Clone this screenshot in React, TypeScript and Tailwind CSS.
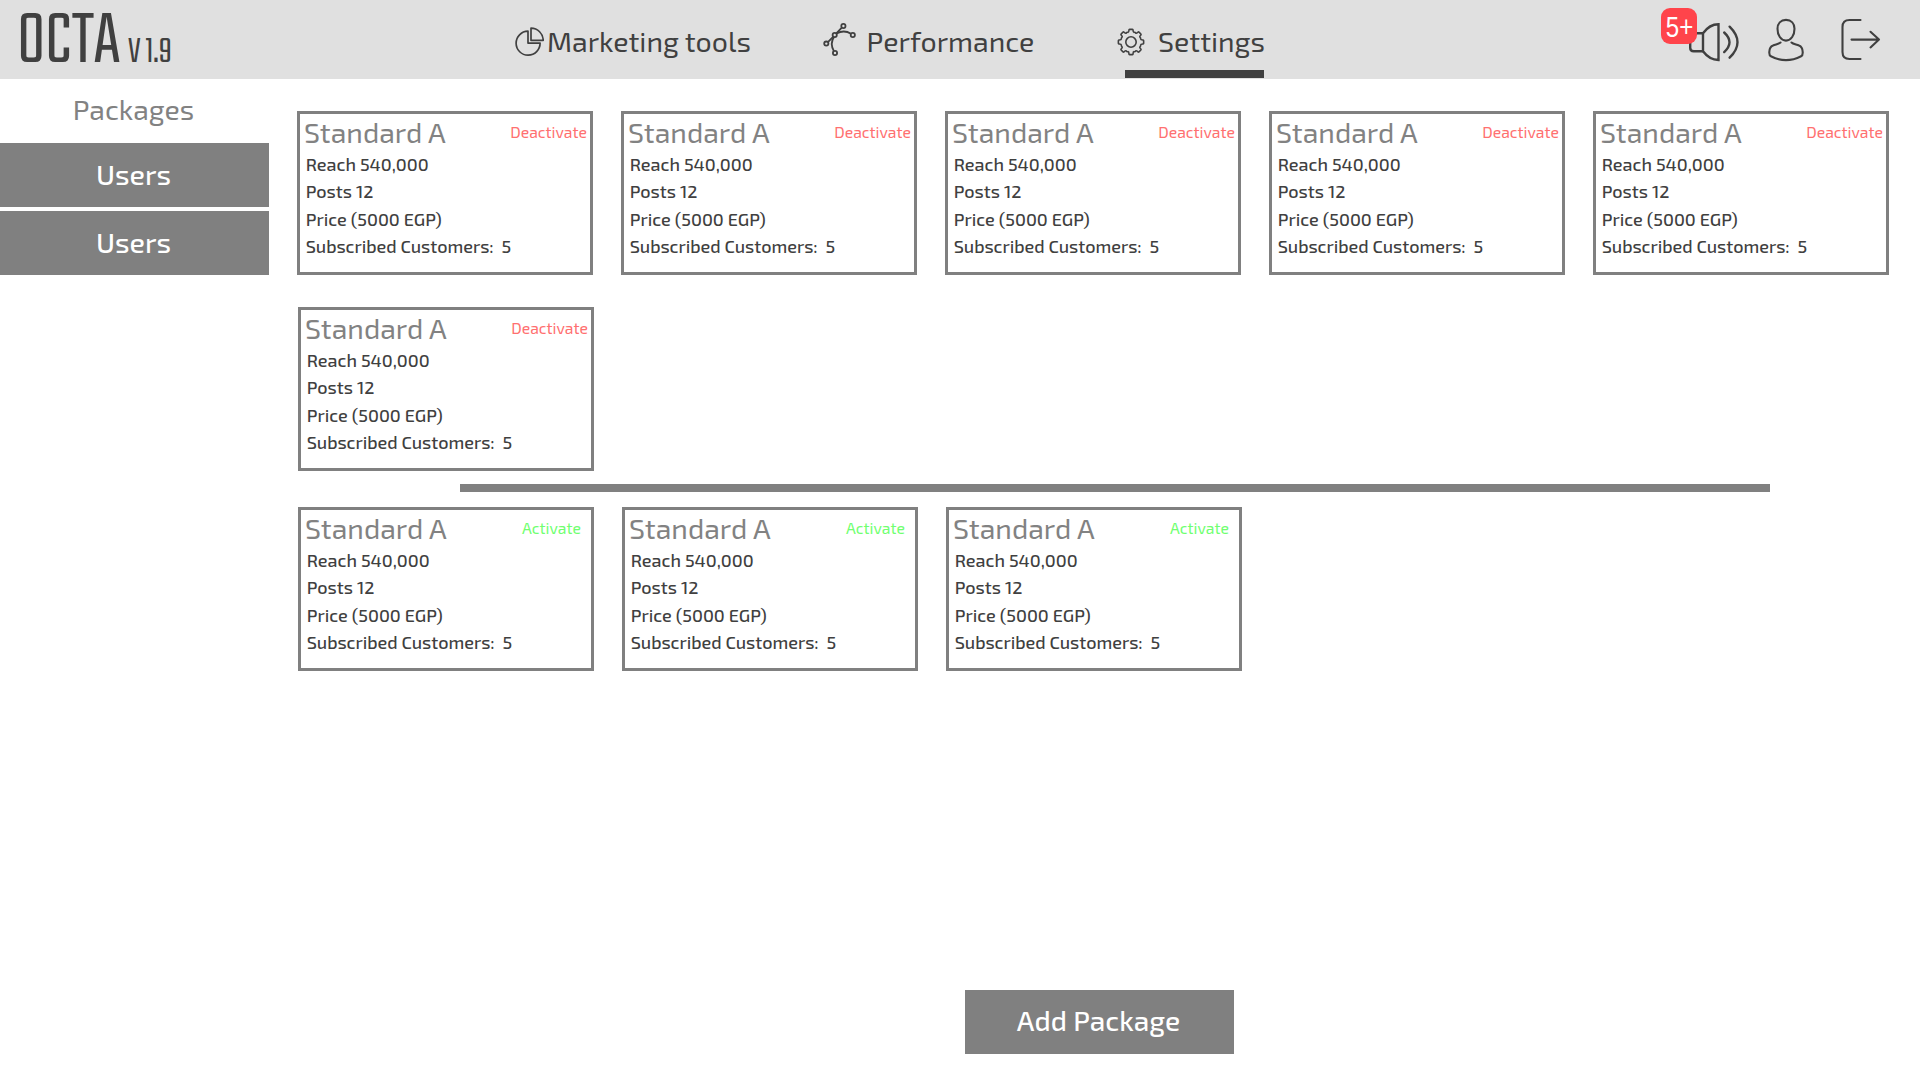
type PackageStatus = "active" | "inactive";

interface Package {
  name: string;
  reach: string;
  posts: number;
  price: string;
  customers: number;
}

const standard: Package = {
  name: "Standard A",
  reach: "540,000",
  posts: 12,
  price: "5000 EGP",
  customers: 5,
};

const firstRow = Array.from({ length: 5 }, () => standard);
const secondRow = [standard];
const inactive = Array.from({ length: 3 }, () => standard);

function PieIcon() {
  return (
    <svg className="h-[30px] w-[30px]" viewBox="514 27 30 30" fill="none" stroke="currentColor" strokeWidth="1.7" strokeLinejoin="round">
      <path d="M528 31.2a12 12 0 1 0 12.1 11.9H528z" />
      <path d="M531 28.2v12.1h12.2A12.2 12.2 0 0 0 531 28.2z" />
    </svg>
  );
}

function CurveIcon() {
  return (
    <svg className="h-[34px] w-[34px]" viewBox="823 23 34 34" fill="none" stroke="currentColor" strokeWidth="1.8">
      <path d="M827.9 42.1l5.2-5.3M836.3 33.4l5.5-5.7" />
      <path d="M836.6 33.4c5-2.6 10-2.4 14.4.3M834.1 36.8c-3 4.5-3 9.5-.2 14.3" />
      <circle cx="843.4" cy="26" r="2.1" />
      <circle cx="834.7" cy="35" r="2.1" />
      <circle cx="826.3" cy="43.6" r="2.1" />
      <circle cx="852.8" cy="35" r="2.1" />
      <circle cx="835" cy="53" r="2.1" />
    </svg>
  );
}

function gearPath(teeth: number, root: number, tip: number) {
  const at = (deg: number, r: number) => {
    const a = (deg * Math.PI) / 180;
    return `${(Math.sin(a) * r).toFixed(2)} ${(-Math.cos(a) * r).toFixed(2)}`;
  };
  const step = 360 / teeth;
  let d = `M${at(-10, tip - 0.8)}`;
  for (let i = 0; i < teeth; i++) {
    const a = i * step;
    d += `Q${at(a - 9.5, tip)} ${at(a - 6, tip)}L${at(a + 6, tip)}Q${at(a + 9.5, tip)} ${at(a + 10, tip - 0.8)}`;
    d += `Q${at(a + 12, root)} ${at(a + 17, root + 0.2)}Q${at(a + step / 2, root + 0.9)} ${at(a + step - 17, root + 0.2)}`;
    d += `Q${at(a + step - 12, root)} ${at(a + step - 10, tip - 0.8)}`;
  }
  return d + "Z";
}

const GEAR = gearPath(8, 9.9, 12.7);

function GearIcon() {
  return (
    <svg className="h-[28px] w-[28px]" viewBox="-14 -14 28 28" fill="none" stroke="currentColor" strokeWidth="1.6" strokeLinejoin="round">
      <path d={GEAR} />
      <circle r="5.2" />
    </svg>
  );
}

function SpeakerIcon() {
  return (
    <svg className="h-[40px] w-[52px]" viewBox="1688 22 52 40" fill="none" stroke="currentColor" strokeWidth="2.4">
      <path d="M1703 33.2h-9.5q-3.3 0-3.3 3.5v11q0 3.6 3.5 3.6h9.3" />
      <path d="M1703 33.2v18.1q6.5 8.7 15.5 8.7V24.2q-9 0-15.5 9z" />
      <path strokeLinecap="round" d="M1724.2 32.5q10.6 9.8 0 19.6M1729.6 26.7q15.8 15.5 0 31" />
    </svg>
  );
}

function UserIcon() {
  return (
    <svg className="h-[44px] w-[38px]" viewBox="1767 18 38 44" fill="none" stroke="currentColor" strokeWidth="2.1" strokeLinecap="round">
      <path d="M1786 19.9c5.3 0 8.5 3.6 8.5 8.8 0 6.3-3.3 11.9-8.5 11.9s-8.5-5.6-8.5-11.9c0-5.2 3.2-8.8 8.5-8.8z" />
      <path d="M1780.5 42.5c-1.5 1.5-4.5 1.8-7.5 3-2.7 1-3.6 3.5-3.7 6.5-.1 2.3-.2 3.3 1.6 4.2 9.5 5 20.7 5 30.2 0 1.8-.9 1.7-1.9 1.6-4.2-.1-3-1-5.5-3.7-6.5-3-1.2-6-1.5-7.5-3" />
    </svg>
  );
}

function LogoutIcon() {
  return (
    <svg className="h-[44px] w-[40px]" viewBox="1841 18 40 44" fill="none" stroke="currentColor" strokeWidth="2.1" strokeLinecap="round" strokeLinejoin="round">
      <path d="M1860.5 20h-11q-7 0-7 7v25q0 7 7 7h11" />
      <path d="M1851.5 39.6h27.3M1870.5 31.8l8.5 7.8-8.5 7.8" />
    </svg>
  );
}

function PackageCard({ item, status }: { item: Package; status: PackageStatus }) {
  return (
    <article className="h-[164px] w-[296px] border-[3px] border-[#808080] pt-px">
      <div className="flex justify-between pl-[4px]">
        <h2 className="text-[28.5px] leading-[35px] text-[#828282]">{item.name}</h2>
        {status === "active" ? (
          <button className="mt-[7px] mr-[3px] h-5 text-[15.8px] leading-5 text-[#ff7070]">Deactivate</button>
        ) : (
          <button className="mt-[7px] mr-[10px] h-5 text-[15.8px] leading-5 text-[#70ff70]">Activate</button>
        )}
      </div>
      <div className="pt-[0.6px] pl-[5.7px] text-[18px] leading-[27.6px] font-medium whitespace-pre text-[#404040]">
        <p>Reach {item.reach}</p>
        <p>Posts {item.posts}</p>
        <p>Price ({item.price})</p>
        <p className="-tracking-[0.04px]">{`Subscribed Customers:  ${item.customers}`}</p>
      </div>
    </article>
  );
}

export default function App() {
  return (
    <div className="flex h-[1080px] w-[1920px] flex-col overflow-hidden bg-white font-['Exo_2','Open_Sans',sans-serif]">
      <header className="flex h-[79px] shrink-0 items-start bg-[#e0e0e0] text-[#404040]">
        <div className="flex w-[514px] items-baseline pl-[17px] font-['Teko','Roboto_Condensed','Liberation_Sans',sans-serif] font-light whitespace-nowrap">
          <span className="text-[79px] leading-[86px] -tracking-[0.4px]">OCTA</span>
          <span className="ml-2 text-[38px] leading-[40px]">V 1.9</span>
        </div>
        <nav className="flex items-start text-[28.5px] leading-[34px]">
          <a className="flex w-[309px] pt-6">
            <span className="mt-[3px] h-[30px]"><PieIcon /></span>
            <span className="ml-[3px]">Marketing tools</span>
          </a>
          <a className="flex w-[293px] pt-6">
            <span className="-mt-px h-[34px]"><CurveIcon /></span>
            <span className="ml-[9.5px]">Performance</span>
          </a>
          <a className="flex flex-col">
            <span className="flex pt-6">
              <span className="mt-1 ml-[0.6px] h-[28px]"><GearIcon /></span>
              <span className="ml-[13.4px]">Settings</span>
            </span>
            <span className="mt-3 ml-[9px] h-2 w-[139px] bg-[#404040]" />
          </a>
        </nav>
        <div className="ml-auto flex items-start pr-[39px]">
          <button className="relative mt-[22px] h-10">
            <SpeakerIcon />
            <span className="absolute -top-[14px] -left-[27px] flex h-9 w-9 items-center justify-center rounded-[9px] bg-[#ff444b] pt-px pl-px font-['Liberation_Sans',sans-serif] text-[29px] leading-9 text-white">
              <span className="scale-x-[0.83]">5+</span>
            </span>
          </button>
          <button className="mt-[18px] ml-[27px] h-[44px]"><UserIcon /></button>
          <button className="mt-[18px] ml-[36px] h-[44px]"><LogoutIcon /></button>
        </div>
      </header>
      <div className="flex flex-1">
        <aside className="flex w-[269px] flex-col text-center text-[28.4px] leading-[34px]">
          <h1 className="h-[64px] pt-[13px] pr-[2px] text-[#828282]">Packages</h1>
          <button className="h-16 bg-[#808080] pr-[2px] pb-[3px] font-medium text-white">Users</button>
          <button className="mt-1 h-16 bg-[#808080] pr-[2px] pb-[3px] font-medium text-white">Users</button>
        </aside>
        <main className="flex flex-1 flex-col pt-8">
          <section className="ml-7 flex gap-7">
            {firstRow.map((item, i) => (
              <PackageCard key={i} item={item} status="active" />
            ))}
          </section>
          <section className="mt-8 ml-[29px] flex gap-7">
            {secondRow.map((item, i) => (
              <PackageCard key={i} item={item} status="active" />
            ))}
          </section>
          <hr className="mt-[13px] ml-[191px] h-2 w-[1310px] border-0 bg-[#808080]" />
          <section className="mt-[15px] ml-[29px] flex gap-7">
            {inactive.map((item, i) => (
              <PackageCard key={i} item={item} status="inactive" />
            ))}
          </section>
          <button className="mt-auto mb-[26px] ml-[696px] h-16 w-[269px] bg-[#808080] pr-[2px] pb-[4px] text-[28.1px] leading-[34px] font-medium text-white">
            Add Package
          </button>
        </main>
      </div>
    </div>
  );
}
